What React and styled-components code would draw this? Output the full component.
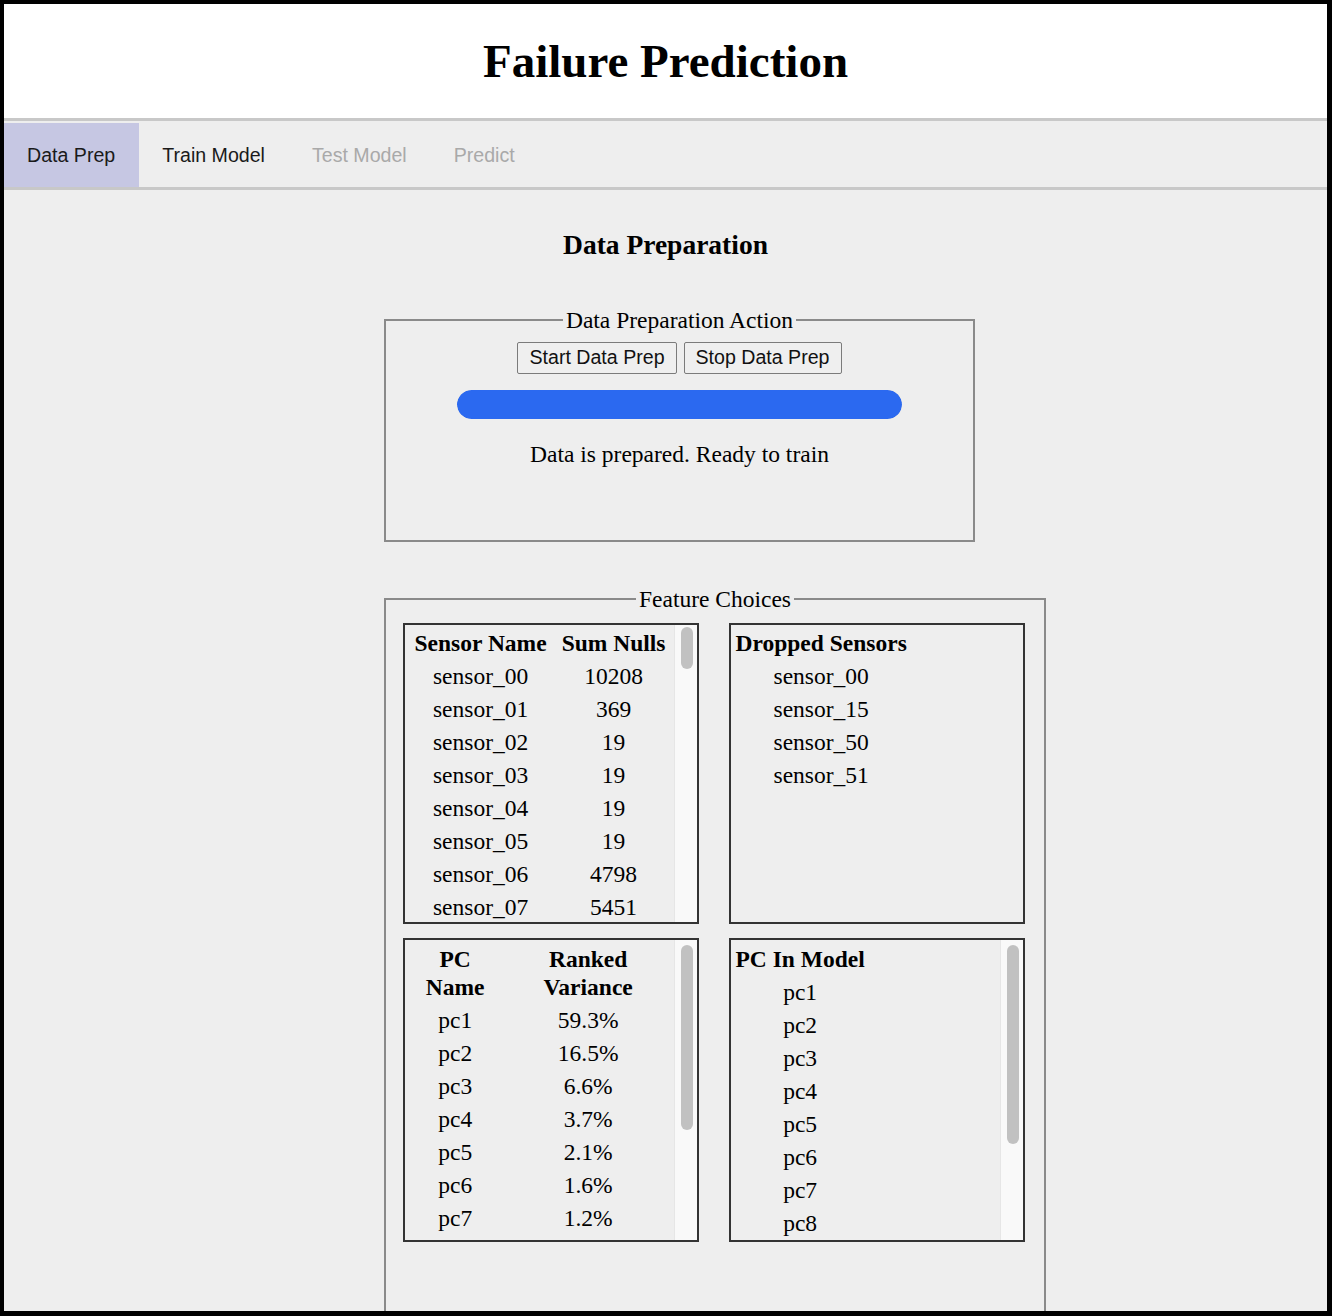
import React from "react";
import styled, { createGlobalStyle } from "styled-components";

const GlobalStyle = createGlobalStyle`
  html, body {
    margin: 0;
    padding: 0;
  }
  body {
    font-family: "Liberation Serif", "Times New Roman", serif;
    font-size: 23.5px;
    color: #000;
  }
`;

const Frame = styled.div`
  box-sizing: border-box;
  height: 100vh;
  border-style: solid;
  border-color: #000;
  border-width: 4px 5px 5px 4px;
  overflow: hidden;
  display: flex;
  flex-direction: column;
  background: #eeeeee;
`;

const Header = styled.header`
  background: #fff;
  height: 114px;
  flex: none;
  display: flex;
  align-items: center;
  justify-content: center;
`;

const Title = styled.h1`
  margin: 0;
  font-size: 47px;
  line-height: 54px;
  font-weight: bold;
`;

const TabBar = styled.nav`
  flex: none;
  display: flex;
  height: 64px;
  padding-top: 2px;
  border-top: 3px solid #c8c8c8;
  border-bottom: 3px solid #c8c8c8;
  background: #eeeeee;
`;

const Tab = styled.button`
  border: 0;
  margin: 0;
  padding: 0 24px 0 23px;
  font-family: "Liberation Sans", Arial, sans-serif;
  font-size: 19.6px;
  background: ${(p) => (p.$active ? "#c6c7e3" : "transparent")};
  color: ${(p) => (p.disabled ? "#a9a9a9" : "#1a1a1a")};
  cursor: ${(p) => (p.disabled ? "default" : "pointer")};
`;

const Main = styled.main`
  padding-top: 39px;
`;

const PageHeading = styled.h3`
  margin: 0 0 46px;
  text-align: center;
  font-size: 27.5px;
  line-height: 31.6px;
  font-weight: bold;
`;

const Column = styled.div`
  margin-left: 380px;
`;

const FieldSet = styled.fieldset`
  box-sizing: border-box;
  width: ${(p) => p.$width}px;
  margin: ${(p) => p.$top || 0}px 0 0;
  padding: 8px 17px ${(p) => p.$bottom || 15}px;
  border: 2px solid #8a8a8a;
`;

const Legend = styled.legend`
  margin: 0 auto;
  padding: 0 3px;
  line-height: 27px;
`;

const ButtonRow = styled.div`
  display: flex;
  justify-content: center;
  gap: 7px;
`;

const ActionButton = styled.button`
  box-sizing: border-box;
  height: 32px;
  padding: 0 11px;
  font-family: "Liberation Sans", Arial, sans-serif;
  font-size: 19.6px;
  color: #111;
  background: #efefef;
  border: 1.5px solid #7b7b7b;
  border-radius: 2px;
`;

const ProgressTrack = styled.div`
  width: 445px;
  height: 29px;
  margin: 16px auto 0;
  border-radius: 15px;
  background: #dcdcdc;
  overflow: hidden;
`;

const ProgressFill = styled.div`
  height: 100%;
  border-radius: 15px;
  background: #2b69f0;
`;

const Status = styled.p`
  margin: 22px 0 57px;
  text-align: center;
  line-height: 27px;
`;

const Grid = styled.div`
  display: grid;
  grid-template-columns: 296px 296px;
  grid-template-rows: 301px 304px;
  column-gap: 30px;
  row-gap: 14px;
  padding-top: 2px;
`;

const ListBox = styled.div`
  box-sizing: border-box;
  height: 100%;
  border: 2px solid #333;
  display: flex;
  overflow: hidden;
`;

const Viewport = styled.div`
  flex: 1;
  min-width: 0;
  overflow: hidden;
  padding-top: ${(p) => p.$shift || 0}px;
`;

const ScrollTrack = styled.div`
  flex: none;
  box-sizing: border-box;
  width: 23px;
  padding: ${(p) => p.$offset}px 5px 4px 6px;
  background: #f9f9f9;
  border-left: 1px solid #e6e6e6;
`;

const ScrollThumb = styled.div`
  width: 12px;
  border-radius: 6px;
  background: #c1c1c1;
`;

const Table = styled.table`
  width: ${(p) => (p.$full ? "100%" : "auto")};
  border-spacing: 3px;
  line-height: 27px;
  font-size: 23.5px;

  th,
  td {
    padding: 1.5px;
    text-align: center;
  }
  th {
    font-weight: bold;
    line-height: 28px;
  }
`;

const nulls = [
  10208, 369, 19, 19, 19, 19, 4798, 5451, 5107, 4595, 19, 19, 19, 19, 21,
  220320, 31, 46, 46, 16, 16, 16, 41, 16, 16, 36, 20, 16, 16, 72, 261, 16,
  68, 16, 16, 16, 16, 16, 27, 27, 27, 27, 27, 27, 27, 27, 27, 27, 27, 27,
  77017, 15383,
];

const sensors = nulls.map((n, i) => ({
  name: `sensor_${String(i).padStart(2, "0")}`,
  nulls: n,
}));

const dropped = ["sensor_00", "sensor_15", "sensor_50", "sensor_51"];

const variance = [
  "59.3%", "16.5%", "6.6%", "3.7%", "2.1%", "1.6%", "1.2%", "1.0%", "0.9%",
  "0.8%", "0.7%", "0.6%",
];

const inModel = Array.from({ length: 12 }, (_, i) => `pc${i + 1}`);

const tabs = [
  { label: "Data Prep", active: true },
  { label: "Train Model" },
  { label: "Test Model", disabled: true },
  { label: "Predict", disabled: true },
];

const TRACK = 288;
function ScrollBar({ rows, offset = 4 }) {
  const visible = 9;
  const h = Math.round((TRACK * Math.min(visible, rows)) / rows);
  return (
    <ScrollTrack $offset={offset}>
      <ScrollThumb style={{ height: h }} />
    </ScrollTrack>
  );
}

export default function App() {
  const progress = 100;

  return (
    <>
      <GlobalStyle />
      <Frame>
        <Header>
          <Title>Failure Prediction</Title>
        </Header>
        <TabBar>
          {tabs.map((t) => (
            <Tab key={t.label} $active={t.active} disabled={t.disabled}>
              {t.label}
            </Tab>
          ))}
        </TabBar>
        <Main>
          <PageHeading>Data Preparation</PageHeading>
          <Column>
            <FieldSet $width={591}>
              <Legend>Data Preparation Action</Legend>
              <ButtonRow>
                <ActionButton>Start Data Prep</ActionButton>
                <ActionButton>Stop Data Prep</ActionButton>
              </ButtonRow>
              <ProgressTrack>
                <ProgressFill style={{ width: `${progress}%` }} />
              </ProgressTrack>
              <Status>Data is prepared. Ready to train</Status>
            </FieldSet>

            <FieldSet $width={662} $top={44} $bottom={90}>
              <Legend>Feature Choices</Legend>
              <Grid>
                <ListBox>
                  <Viewport>
                    <Table $full>
                      <thead>
                        <tr>
                          <th>Sensor Name</th>
                          <th>Sum Nulls</th>
                        </tr>
                      </thead>
                      <tbody>
                        {sensors.map((s) => (
                          <tr key={s.name}>
                            <td>{s.name}</td>
                            <td>{s.nulls}</td>
                          </tr>
                        ))}
                      </tbody>
                    </Table>
                  </Viewport>
                  <ScrollBar rows={sensors.length + 10} offset={2} />
                </ListBox>

                <ListBox>
                  <Viewport>
                    <Table>
                      <thead>
                        <tr>
                          <th>Dropped Sensors</th>
                        </tr>
                      </thead>
                      <tbody>
                        {dropped.map((d) => (
                          <tr key={d}>
                            <td>{d}</td>
                          </tr>
                        ))}
                      </tbody>
                    </Table>
                  </Viewport>
                </ListBox>

                <ListBox>
                  <Viewport $shift={1}>
                    <Table $full>
                      <thead>
                        <tr>
                          <th>PC Name</th>
                          <th>Ranked Variance</th>
                        </tr>
                      </thead>
                      <tbody>
                        {variance.map((v, i) => (
                          <tr key={i}>
                            <td>pc{i + 1}</td>
                            <td>{v}</td>
                          </tr>
                        ))}
                      </tbody>
                    </Table>
                  </Viewport>
                  <ScrollBar rows={variance.length + 2} offset={5} />
                </ListBox>

                <ListBox>
                  <Viewport $shift={1}>
                    <Table>
                      <thead>
                        <tr>
                          <th>PC In Model</th>
                        </tr>
                      </thead>
                      <tbody>
                        {inModel.map((pc) => (
                          <tr key={pc}>
                            <td>{pc}</td>
                          </tr>
                        ))}
                      </tbody>
                    </Table>
                  </Viewport>
                  <ScrollBar rows={inModel.length + 1} offset={5} />
                </ListBox>
              </Grid>
            </FieldSet>
          </Column>
        </Main>
      </Frame>
    </>
  );
}
